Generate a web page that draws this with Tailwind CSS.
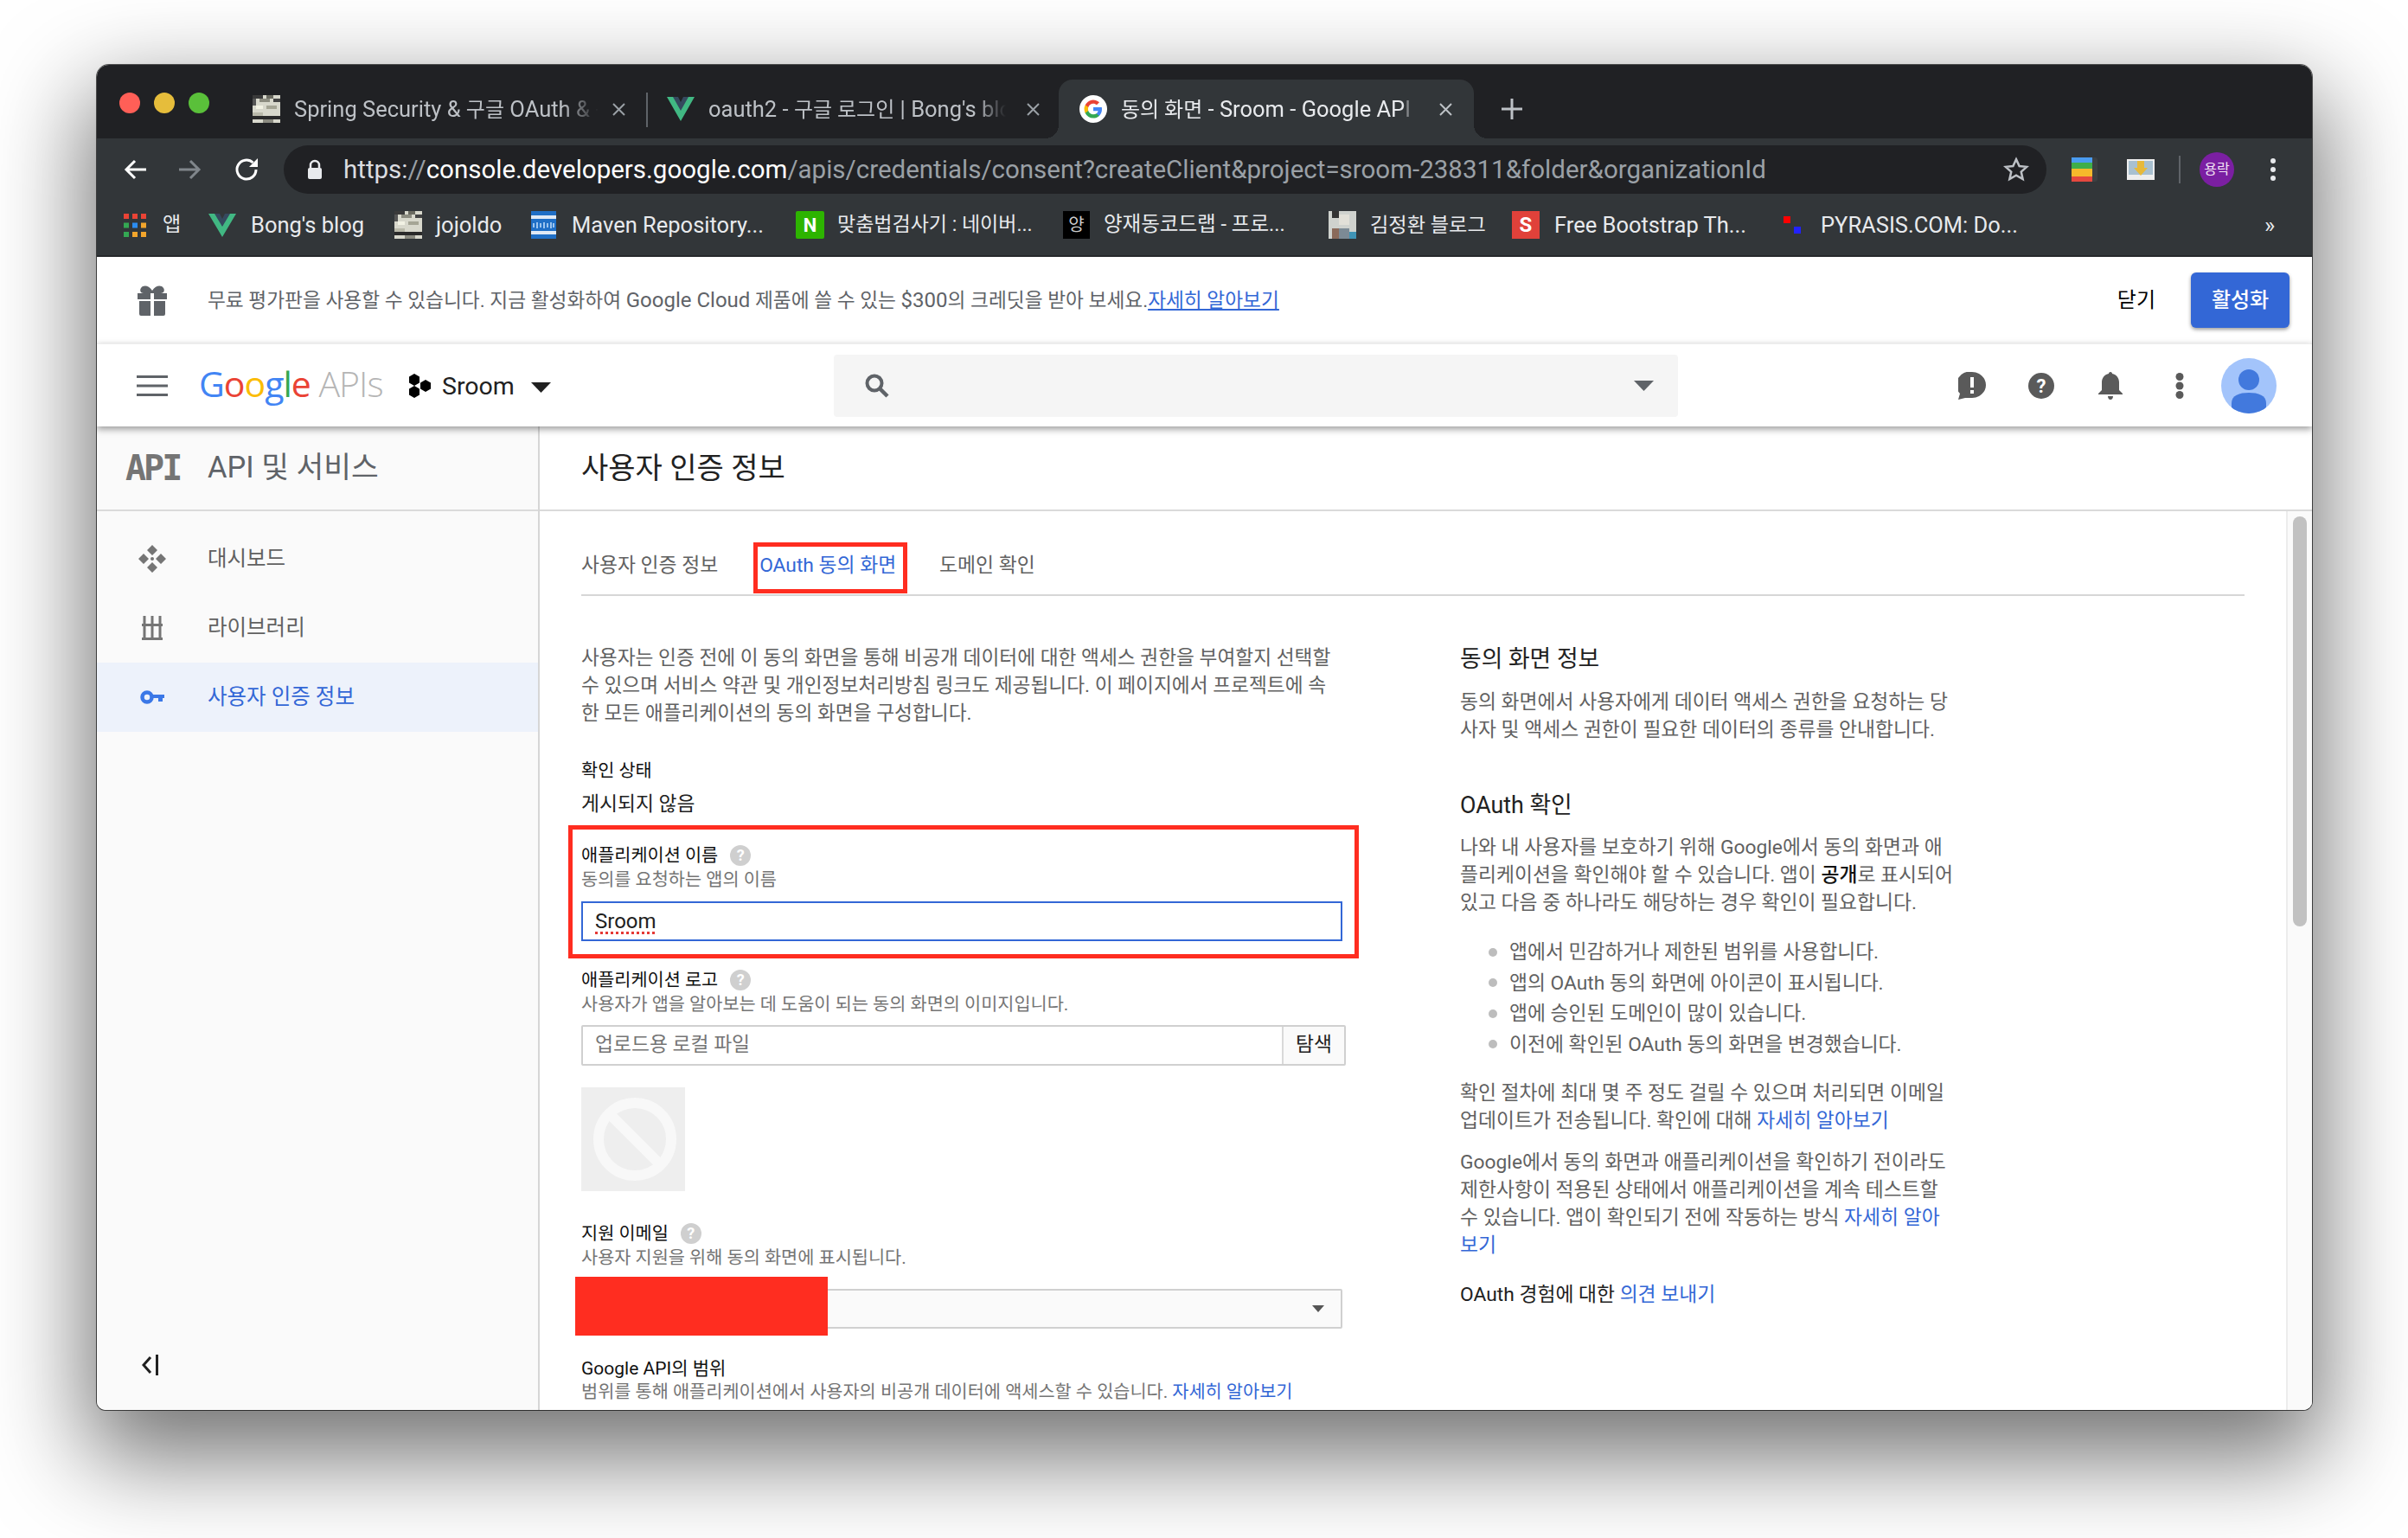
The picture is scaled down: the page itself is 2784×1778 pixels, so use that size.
<!DOCTYPE html>
<html lang="ko">
<head>
<meta charset="UTF-8">
<title>동의 화면 - Sroom - Google API</title>
<script src="https://cdn.jsdelivr.net/npm/@tailwindcss/browser@4"></script>
</head>
<body class="w-[2784px] h-[1778px] overflow-hidden bg-white pl-[112px] pt-[75px] font-['Roboto','Noto_Sans_CJK_KR',sans-serif]">
<div class="w-[2561px] h-[1555px] rounded-t-[14px] rounded-b-[10px] overflow-hidden flex flex-col bg-white shadow-[0_0_0_1px_rgba(0,0,0,0.65),0_44px_110px_12px_rgba(0,0,0,0.55)]">

  <!-- tab strip -->
  <div class="h-[85px] shrink-0 bg-[#202124] flex items-end pl-[26px]">
    <div class="flex items-center gap-[16px] self-stretch pt-[3px]">
      <span class="w-[24px] h-[24px] rounded-full bg-[#ff5f57]"></span>
      <span class="w-[24px] h-[24px] rounded-full bg-[#e6bd3b]"></span>
      <span class="w-[24px] h-[24px] rounded-full bg-[#5ac03a]"></span>
    </div>
    <div class="flex items-center h-[68px] ml-[50px] w-[455px] text-[25.5px] text-[#bdc1c6]">
      <svg class="w-[32px] h-[32px] mr-[16px] shrink-0" viewBox="0 0 8 8"><rect width="8" height="8" fill="#d8d8cc"/><rect width="3" height="1" fill="#3a3a3a"/><rect x="4" width="2" height="1" fill="#6a6a60"/><rect y="1" width="1" height="2" fill="#555"/><rect x="2" y="1" width="3" height="1" fill="#8c8c80"/><rect x="6" y="1" width="2" height="1" fill="#444"/><rect x="1" y="3" width="2" height="1" fill="#f2f2e4"/><rect x="4" y="3" width="3" height="1" fill="#a5a595"/><rect y="5" width="3" height="1" fill="#b9b9aa"/><rect y="6" width="8" height="1" fill="#2a2a2a"/><rect x="3" y="7" width="3" height="1" fill="#8a8a80"/></svg>
      <span class="w-[352px] overflow-hidden whitespace-nowrap [mask-image:linear-gradient(to_right,black_88%,transparent)]">Spring Security &amp; <span class="text-[24px]">구글</span> OAuth &amp; <span class="text-[24px]">구글</span></span>
      <svg class="ml-[16px] w-[15px] h-[15px] shrink-0" viewBox="0 0 15 15"><path d="m1 1 13 13M14 1 1 14" stroke="#9aa0a6" stroke-width="2"/></svg>
    </div>
    <div class="h-[40px] w-[2px] bg-[#5f6368] mb-[13px]"></div>
    <div class="flex items-center h-[68px] ml-[22px] w-[453px] text-[25.5px] text-[#bdc1c6]">
      <svg class="w-[32px] h-[32px] mr-[16px] shrink-0" viewBox="0 0 32 32"><path d="M0 2h8l8 14 8-14h8L16 30z" fill="#41b883"/><path d="M7 2h6l3 6 3-6h6L16 18z" fill="#35495e"/></svg>
      <span class="w-[344px] overflow-hidden whitespace-nowrap [mask-image:linear-gradient(to_right,black_90%,transparent)]">oauth2 - <span class="text-[24px]">구글 로그인</span> | Bong's blog</span>
      <svg class="ml-[24px] w-[15px] h-[15px] shrink-0" viewBox="0 0 15 15"><path d="m1 1 13 13M14 1 1 14" stroke="#9aa0a6" stroke-width="2"/></svg>
    </div>
    <div class="relative flex items-center h-[68px] w-[480px] pl-[24px] bg-[#323639] rounded-t-[16px] text-[25.5px] text-[#e8eaed]">
      <span class="absolute -left-[16px] bottom-0 w-[16px] h-[16px] bg-[radial-gradient(circle_at_0_0,#202124_16px,#323639_16px)]"></span>
      <span class="absolute -right-[16px] bottom-0 w-[16px] h-[16px] bg-[radial-gradient(circle_at_100%_0,#202124_16px,#323639_16px)]"></span>
      <svg class="w-[32px] h-[32px] mr-[16px] shrink-0" viewBox="0 0 32 32"><circle cx="16" cy="16" r="16" fill="#fff"/><path d="M26 16.300c0-.8-.1-1.500-.2-2.200H16v4.100h5.600a4.800 4.800 0 0 1-2 3.100v2.600h3.300c1.900-1.800 3.100-4.400 3.100-7.600z" fill="#4285f4"/><path d="M16 26.500c2.800 0 5.100-.9 6.900-2.600l-3.300-2.600c-.9.600-2.100 1-3.600 1-2.700 0-5-1.800-5.800-4.300H6.700v2.700a10.400 10.400 0 0 0 9.300 5.800z" fill="#34a853"/><path d="M10.200 18c-.4-1.300-.4-2.700 0-4v-2.700H6.700a10.400 10.400 0 0 0 0 9.400z" fill="#fbbc05"/><path d="M16 9.700c1.500 0 2.900.5 4 1.600l3-3A10.400 10.400 0 0 0 6.700 11.300l3.500 2.700c.8-2.500 3.100-4.300 5.800-4.300z" fill="#ea4335"/></svg>
      <span class="w-[336px] overflow-hidden whitespace-nowrap [mask-image:linear-gradient(to_right,black_97%,transparent)]"><span class="text-[24px]">동의 화면</span> - Sroom - Google API</span>
      <svg class="ml-[32px] w-[15px] h-[15px] shrink-0" viewBox="0 0 15 15"><path d="m1 1 13 13M14 1 1 14" stroke="#bdc1c6" stroke-width="2"/></svg>
    </div>
    <svg class="w-[24px] h-[24px] ml-[32px] mb-[22px]" viewBox="0 0 24 24"><path d="M12 0v24M0 12h24" stroke="#bdc1c6" stroke-width="3"/></svg>
  </div>

  <!-- toolbar -->
  <div class="h-[80px] shrink-0 bg-[#323639] flex items-center pl-[31px] pb-[8px]">
    <svg class="w-[26px] h-[26px] shrink-0" viewBox="0 0 26 26"><path d="M26 13H3M13 3 3 13l10 10" fill="none" stroke="#fff" stroke-width="3"/></svg>
    <svg class="w-[26px] h-[26px] shrink-0 ml-[38px]" viewBox="0 0 26 26"><path d="M0 13h23M13 3l10 10-10 10" fill="none" stroke="#80868b" stroke-width="3"/></svg>
    <svg class="w-[28px] h-[28px] shrink-0 ml-[38px]" viewBox="0 0 28 28"><path d="M25 14a11 11 0 1 1-3.500-8" fill="none" stroke="#fff" stroke-width="3"/><path d="M27 1v10H17z" fill="#fff"/></svg>
    <div class="ml-[29px] w-[2038px] h-[56px] rounded-full bg-[#202124] flex items-center pl-[27px] pr-[20px] text-[29.5px] whitespace-nowrap">
      <svg class="w-[18px] h-[24px] shrink-0 mr-[24px]" viewBox="0 0 18 24"><path d="M4 10V7a5 5 0 0 1 10 0v3" fill="none" stroke="#e8eaed" stroke-width="2.500"/><rect x="1" y="10" width="16" height="13" rx="2" fill="#e8eaed"/></svg>
      <span class="text-[#9aa0a6] flex-1"><span class="text-[#dadce0]">https:</span>//<span class="text-white">console.developers.google.com</span>/apis/credentials/consent?createClient&amp;project=sroom-238311&amp;folder&amp;organizationId</span>
      <svg class="w-[30px] h-[30px] shrink-0" viewBox="0 0 24 24"><path d="m12 2.500 2.900 6.300 6.800.7-5.100 4.600 1.500 6.800-6.100-3.500-6.100 3.500 1.500-6.800L2.300 9.500l6.800-.7z" fill="none" stroke="#bdc1c6" stroke-width="2"/></svg>
    </div>
    <svg class="w-[30px] h-[28px] shrink-0 ml-[29px]" viewBox="0 0 30 28"><rect width="30" height="28" rx="3" fill="#3c4043"/><rect width="24" height="7" fill="#4a9cf0"/><rect y="6" width="24" height="8" fill="#3fae49"/><rect y="13" width="24" height="9" fill="#f6b92b"/><rect y="22" width="24" height="6" fill="#e5483f"/></svg>
    <svg class="w-[32px] h-[24px] shrink-0 ml-[34px]" viewBox="0 0 32 24"><rect width="32" height="24" fill="#eee"/><rect x="2" y="2" width="28" height="16" fill="#a8c0d0"/><path d="M12 2h8v8h4l-8 9-8-9h4z" fill="#e7b93a"/></svg>
    <div class="w-[2px] h-[32px] bg-[#5f6368] ml-[28px] shrink-0"></div>
    <div class="w-[40px] h-[40px] rounded-full bg-[#7b1fa2] text-[#f3e5f5] text-[16px] ml-[22px] flex items-center justify-center shrink-0">용락</div>
    <svg class="w-[8px] h-[28px] ml-[41px] shrink-0" viewBox="0 0 8 28"><circle cx="4" cy="4" r="3" fill="#e8eaed"/><circle cx="4" cy="14" r="3" fill="#e8eaed"/><circle cx="4" cy="24" r="3" fill="#e8eaed"/></svg>
  </div>

  <!-- bookmarks -->
  <div class="h-[57px] shrink-0 bg-[#323639] flex items-center pl-[31px] pb-[15px] text-[25.5px] text-[#e8eaed] whitespace-nowrap border-b-[2px] border-[#26282b]">
    <svg class="w-[26px] h-[27px] shrink-0 mr-[19px]" viewBox="0 0 26 27"><g fill="#ea4335"><rect width="6" height="6"/><rect x="10" width="6" height="6"/><rect x="20" width="6" height="6"/></g><rect y="10.500" width="6" height="6" fill="#34a853"/><rect x="10" y="10.500" width="6" height="6" fill="#2b8cf0"/><rect x="20" y="10.500" width="6" height="6" fill="#f2a52c"/><rect y="21" width="6" height="6" fill="#34a853"/><rect x="10" y="21" width="6" height="6" fill="#f2a52c"/><rect x="20" y="21" width="6" height="6" fill="#f2a52c"/></svg>
    <span class="w-[53px] shrink-0 text-[23px]">앱</span>
    <svg class="w-[32px] h-[32px] shrink-0 mr-[17px]" viewBox="0 0 32 32"><path d="M0 3h8l8 14 8-14h8L16 30z" fill="#41b883"/><path d="M7 3h6l3 6 3-6h6L16 18z" fill="#35495e"/></svg>
    <span class="w-[166px] shrink-0">Bong's blog</span>
    <svg class="w-[32px] h-[32px] shrink-0 mr-[16px]" viewBox="0 0 8 8"><rect width="8" height="8" fill="#d8d8cc"/><rect width="3" height="1" fill="#3a3a3a"/><rect x="4" width="2" height="1" fill="#6a6a60"/><rect y="1" width="1" height="2" fill="#555"/><rect x="2" y="1" width="3" height="1" fill="#8c8c80"/><rect x="6" y="1" width="2" height="1" fill="#444"/><rect x="1" y="3" width="2" height="1" fill="#f2f2e4"/><rect x="4" y="3" width="3" height="1" fill="#a5a595"/><rect y="5" width="3" height="1" fill="#b9b9aa"/><rect y="6" width="8" height="1" fill="#2a2a2a"/><rect x="3" y="7" width="3" height="1" fill="#8a8a80"/></svg>
    <span class="w-[110px] shrink-0">jojoldo</span>
    <svg class="w-[29px] h-[32px] shrink-0 mr-[18px]" viewBox="0 0 29 32"><rect width="29" height="32" fill="#1f6fc6"/><rect y="5" width="29" height="4" fill="#dfe9f5"/><rect y="23" width="29" height="4" fill="#dfe9f5"/><path d="M3 14v5M7 13v7M11 14v5M15 13v7M19 14v5M23 13v7M26 14v5" stroke="#9cc4ee" stroke-width="2"/></svg>
    <span class="w-[259px] shrink-0">Maven Repository...</span>
    <div class="w-[33px] h-[32px] shrink-0 mr-[15px] bg-[#2db400] rounded-[2px] text-white font-bold text-[22px] flex items-center justify-center">N</div>
    <span class="w-[261px] shrink-0 text-[23px]">맞춤법검사기 : 네이버...</span>
    <div class="w-[31px] h-[32px] shrink-0 mr-[16px] bg-black text-[#ccc] text-[20px] flex items-center justify-center">양</div>
    <span class="w-[260px] shrink-0 text-[23.500px]">양재동코드랩 - 프로...</span>
    <svg class="w-[32px] h-[32px] shrink-0 mr-[16px]" viewBox="0 0 8 8"><rect width="8" height="8" fill="#cfd2ce"/><rect x="1" y="0" width="2" height="2" fill="#333"/><rect x="3" y="1" width="3" height="3" fill="#e2e0d8"/><rect x="1" y="5" width="2" height="3" fill="#8a6a5a"/><rect x="3" y="5" width="3" height="3" fill="#7c8a95"/><rect x="6" y="6" width="2" height="2" fill="#3f93b5"/></svg>
    <span class="w-[164px] shrink-0 text-[23.200px]">김정환 블로그</span>
    <div class="w-[32px] h-[32px] shrink-0 mr-[17px] bg-[#e0413a] text-white font-bold text-[24px] flex items-center justify-center">S</div>
    <span class="w-[265px] shrink-0">Free Bootstrap Th...</span>
    <svg class="w-[20px] h-[32px] shrink-0 mr-[23px]" viewBox="0 0 20 32"><rect y="6" width="8" height="8" fill="#f00"/><rect x="12" y="18" width="8" height="8" fill="#22f"/></svg>
    <span class="w-[513px] shrink-0">PYRASIS.COM: Do...</span>
    <span class="text-[26px] text-[#e8eaed]">»</span>
  </div>

  <!-- free trial banner -->
  <div class="h-[100px] shrink-0 bg-white flex items-center pl-[46px] pr-[26px]">
    <svg class="w-[36px] h-[36px] shrink-0" viewBox="0 0 36 36"><path d="M1 10h15v7H1zM20 10h15v7H20zM3 19h13v17H5a2 2 0 0 1-2-2zM20 19h13v15a2 2 0 0 1-2 2H20zM5 4c3-4 9-3 13 3 4-6 10-7 13-3 2 3 0 6-3 6H8C5 10 3 7 5 4z" fill="#5f6368"/></svg>
    <p class="ml-[46px] text-[22.700px] text-[#5f6368] whitespace-nowrap flex-1">무료 평가판을 사용할 수 있습니다. 지금 활성화하여 <span class="text-[24px]">Google Cloud</span> 제품에 쓸 수 있는 <span class="text-[24px]">$300</span>의 크레딧을 받아 보세요.<a class="text-[#3367d6] underline">자세히 알아보기</a></p>
    <span class="text-[24px] text-black mr-[41px]">닫기</span>
    <button class="w-[114px] h-[64px] rounded-[6px] bg-[#3367d6] text-white text-[24px] font-medium shadow-[0_2px_4px_rgba(0,0,0,0.4)]">활성화</button>
  </div>

  <!-- google apis bar -->
  <div class="relative z-10 h-[96px] shrink-0 bg-white flex items-center pl-[46px] border-t border-[#eeeeee] shadow-[0_3px_8px_rgba(0,0,0,0.4)]">
    <div class="w-[806px] shrink-0 flex items-center">
      <svg class="w-[36px] h-[24px] shrink-0" viewBox="0 0 36 24"><path d="M0 1.500h36M0 12h36M0 22.500h36" stroke="#5f6368" stroke-width="3"/></svg>
      <span class="ml-[36px] w-[210px] shrink-0 pb-[4px] text-[41px] tracking-[-1px] leading-none whitespace-nowrap font-['Open_Sans',sans-serif]"><span class="text-[#4285f4]">G</span><span class="text-[#ea4335]">o</span><span class="text-[#fbbc05]">o</span><span class="text-[#4285f4]">g</span><span class="text-[#34a853]">l</span><span class="text-[#ea4335]">e</span><span class="text-[#b5b5b5] font-light"> APIs</span></span>
      <svg class="w-[27px] h-[28px] shrink-0 ml-[32px]" viewBox="0 0 27 28"><path d="M7 0l6 3.500v7L7 14l-6-3.500v-7zM7 14l6 3.500v7L7 28l-6-3.500v-7zM20 7l6 3.500v7L20 21l-6-3.500v-7z" fill="#000"/></svg>
      <span class="ml-[12px] text-[28.500px] text-[#212121] pt-[3px]">Sroom</span>
      <svg class="w-[23px] h-[12px] ml-[19px] mt-[4px] shrink-0" viewBox="0 0 23 12"><path d="M0 0h23L11.500 12z" fill="#212121"/></svg>
    </div>
    <div class="w-[976px] h-[72px] shrink-0 rounded-[4px] bg-[#f5f5f5] flex items-center justify-between pl-[36px] pr-[28px]">
      <svg class="w-[28px] h-[28px]" viewBox="0 0 28 28"><circle cx="11" cy="11" r="8.500" fill="none" stroke="#5f6368" stroke-width="4"/><path d="m17 17 9 9" stroke="#5f6368" stroke-width="4.500"/></svg>
      <svg class="w-[23px] h-[12px]" viewBox="0 0 23 12"><path d="M0 0h23L11.500 12z" fill="#5f6368"/></svg>
    </div>
    <svg class="w-[32px] h-[32px] ml-[324px] shrink-0" viewBox="0 0 32 32"><path d="M16 0a16 15 0 0 1 0 30H8l-8 2 2-7A15 15 0 0 1 16 0z" fill="#5a5a5a"/><rect x="14" y="6" width="4" height="12" fill="#fff"/><rect x="14" y="21" width="4" height="4" fill="#fff"/></svg>
    <svg class="w-[30px] h-[30px] ml-[49px] shrink-0" viewBox="0 0 30 30"><circle cx="15" cy="15" r="15" fill="#5a5a5a"/><text x="15" y="23" text-anchor="middle" font-size="22" font-weight="700" fill="#fff" font-family="Roboto">?</text></svg>
    <svg class="w-[28px] h-[32px] ml-[51px] shrink-0" viewBox="0 0 28 32"><path d="M14 0c1.500 0 2 1 2 2 5 1 8 5 8 10v9l4 4v1H0v-1l4-4v-9c0-5 3-9 8-10 0-1 .5-2 2-2zM11 28h6c0 2-1 4-3 4s-3-2-3-4z" fill="#5a5a5a"/></svg>
    <svg class="w-[10px] h-[30px] ml-[61px] shrink-0" viewBox="0 0 10 30"><circle cx="5" cy="4.500" r="4.500" fill="#5a5a5a"/><circle cx="5" cy="15" r="4.500" fill="#5a5a5a"/><circle cx="5" cy="25.500" r="4.500" fill="#5a5a5a"/></svg>
    <svg class="w-[64px] h-[64px] ml-[43px] shrink-0" viewBox="0 0 64 64"><defs><clipPath id="av"><circle cx="32" cy="32" r="32"/></clipPath></defs><circle cx="32" cy="32" r="32" fill="#a3c4fb"/><g clip-path="url(#av)" fill="#4279dd"><ellipse cx="32" cy="25" rx="12" ry="12"/><path d="M12 64V52c0-9 9-12 20-12s20 3 20 12v12z"/></g></svg>
  </div>

  <!-- body -->
  <div class="flex-1 min-h-0 flex">
    <aside class="w-[512px] shrink-0 bg-[#fafafa] border-r-[2px] border-[#d6d6d6] flex flex-col">
      <div class="h-[98px] shrink-0 border-b-[2px] border-[#dadada] flex items-center pl-[33px]">
        <span class="w-[95px] text-[40px] leading-none font-bold text-[#757575] font-['DejaVu_Sans_Mono',monospace] tracking-[-3px]">API</span>
        <span class="text-[34.500px] text-[#5f6368]">API 및 서비스</span>
      </div>
      <nav class="pt-[15px] text-[24.500px] text-[#616161]">
        <div class="h-[80px] flex items-center">
          <div class="w-[128px] shrink-0 flex justify-center">
            <svg class="w-[32px] h-[32px]" viewBox="0 0 32 32"><path d="M16 0l6 6-6 6-6-6zM16 32l-6-6 6-6 6 6zM0 16l6-6 6 6-6 6zM32 16l-6 6-6-6 6-6z" fill="#757575"/><circle cx="16" cy="16" r="2" fill="#757575"/></svg>
          </div>
          <span>대시보드</span>
        </div>
        <div class="h-[80px] flex items-center">
          <div class="w-[128px] shrink-0 flex justify-center">
            <svg class="w-[24px] h-[28px]" viewBox="0 0 24 28"><path d="M3 0v26M12 0v26M21 0v26" stroke="#757575" stroke-width="3" fill="none"/><rect y="9" width="24" height="3" fill="#757575"/><rect y="25" width="24" height="3" fill="#757575"/></svg>
          </div>
          <span>라이브러리</span>
        </div>
        <div class="h-[80px] flex items-center bg-[#edf2fb] text-[#3367d6]">
          <div class="w-[128px] shrink-0 flex justify-center">
            <svg class="w-[28px] h-[16px]" viewBox="0 0 28 16"><circle cx="8" cy="8" r="5.500" fill="none" stroke="#3b78e7" stroke-width="4.500"/><path d="M14 5h14v4h-2v4h-5V9h-7z" fill="#3b78e7"/></svg>
          </div>
          <span>사용자 인증 정보</span>
        </div>
      </nav>
      <div class="mt-auto pl-[52px] pb-[40px]">
        <svg class="w-[20px] h-[24px]" viewBox="0 0 20 24"><path d="M10 3 2 12l8 9" fill="none" stroke="#212121" stroke-width="3"/><rect x="16" y="0" width="3" height="24" fill="#212121"/></svg>
      </div>
    </aside>
    <main class="flex-1 min-w-0 bg-white flex flex-col">
      <div class="h-[98px] shrink-0 border-b-[2px] border-[#dadada] flex items-center pl-[48px] text-[34px] text-[#212121]">사용자 인증 정보</div>
      <div class="flex-1 min-h-0 flex overflow-hidden">
        <div class="flex-1 min-w-0 pl-[48px] pr-[48px] overflow-hidden">
          <div class="h-[98px] flex items-center border-b-[2px] border-[#d6d6d6] text-[22.800px] leading-[32px] text-[#616161] pt-[30px]">
            <span>사용자 인증 정보</span>
            <span class="relative ml-[48px] text-[#3367d6]">OAuth 동의 화면
              <span class="absolute -left-[7px] -right-[13px] -top-[11px] -bottom-[16px] border-[5px] border-[#ff2d20]"></span>
            </span>
            <span class="ml-[50px]">도메인 확인</span>
          </div>
          <div class="flex mt-[56px]">
            <div class="w-[880px] shrink-0">
              <p class="text-[22.700px] leading-[32px] text-[#616161] w-[872px]">사용자는 인증 전에 이 동의 화면을 통해 비공개 데이터에 대한 액세스 권한을 부여할지 선택할 수 있으며 서비스 약관 및 개인정보처리방침 링크도 제공됩니다. 이 페이지에서 프로젝트에 속한 모든 애플리케이션의 동의 화면을 구성합니다.</p>
              <div class="mt-[36px] text-[20.800px] leading-[28px] text-[#111111]">확인 상태</div>
              <div class="mt-[9px] text-[22.800px] leading-[32px] text-[#212121]">게시되지 않음</div>

              <div class="relative mt-[29px] w-[880px]">
                <div class="absolute -left-[15px] -right-[19px] -top-[21px] -bottom-[20px] border-[5px] border-[#ff2d20]"></div>
                <div class="flex items-center text-[20.800px] leading-[28px] text-[#111111]">애플리케이션 이름<span class="ml-[14px] w-[24px] h-[24px] rounded-full bg-[#cfcfcf] text-white text-[18px] font-bold flex items-center justify-center">?</span></div>
                <div class="text-[20.800px] leading-[28px] text-[#757575]">동의를 요청하는 앱의 이름</div>
                <div class="mt-[11px] h-[46px] border-[2px] border-[#3367d6] flex items-center pl-[14px] text-[24px] text-[#212121]"><span class="underline decoration-dotted decoration-[#e53935] decoration-[3px] underline-offset-[4px]">Sroom</span></div>
              </div>

              <div class="mt-[31px] flex items-center text-[20.800px] leading-[28px] text-[#111111]">애플리케이션 로고<span class="ml-[14px] w-[24px] h-[24px] rounded-full bg-[#cfcfcf] text-white text-[18px] font-bold flex items-center justify-center">?</span></div>
              <div class="text-[20.800px] leading-[28px] text-[#757575]">사용자가 앱을 알아보는 데 도움이 되는 동의 화면의 이미지입니다.</div>
              <div class="mt-[10px] w-[884px] h-[47px] border-[2px] border-[#d0d0d0] rounded-[2px] flex items-stretch text-[22.800px]">
                <span class="flex-1 flex items-center pl-[14px] text-[#757575]">업로드용 로컬 파일</span>
                <span class="w-[72px] bg-[#fafafa] border-l-[2px] border-[#d9d9d9] flex items-center justify-center text-[#212121]">탐색</span>
              </div>
              <div class="mt-[25px] w-[120px] h-[120px] bg-[#eeeeee] flex items-center justify-center">
                <svg class="w-[96px] h-[96px] translate-x-[2px]" viewBox="0 0 96 96"><circle cx="48" cy="48" r="42" fill="none" stroke="#f8f8f8" stroke-width="12"/><path d="M20 20l56 56" stroke="#f8f8f8" stroke-width="12"/></svg>
              </div>

              <div class="mt-[35px] flex items-center text-[20.800px] leading-[28px] text-[#111111]">지원 이메일<span class="ml-[14px] w-[24px] h-[24px] rounded-full bg-[#cfcfcf] text-white text-[18px] font-bold flex items-center justify-center">?</span></div>
              <div class="text-[20.800px] leading-[28px] text-[#757575]">사용자 지원을 위해 동의 화면에 표시됩니다.</div>
              <div class="relative mt-[22px] h-[46px] border-[2px] border-[#d0d0d0] rounded-[2px] bg-[#fafafa] flex items-center justify-end pr-[19px]">
                <svg class="w-[14px] h-[8px]" viewBox="0 0 14 8"><path d="M0 0h14L7 8z" fill="#555"/></svg>
                <div class="absolute -left-[9px] -top-[16px] w-[292px] h-[68px] bg-[#ff2d20]"></div>
              </div>

              <div class="mt-[32px] text-[21px] leading-[28px] text-[#111111]">Google API의 범위</div>
              <div class="text-[20.800px] leading-[26px] text-[#757575] whitespace-nowrap">범위를 통해 애플리케이션에서 사용자의 비공개 데이터에 액세스할 수 있습니다. <a class="text-[#3367d6]">자세히 알아보기</a></div>
            </div>
            <div class="w-[573px] ml-[136px] shrink-0 -mt-[1px] text-[22.800px] leading-[32px] text-[#616161]">
              <h3 class="text-[26.800px] leading-[36px] text-[#212121]">동의 화면 정보</h3>
              <p class="mt-[16px]">동의 화면에서 사용자에게 데이터 액세스 권한을 요청하는 당사자 및 액세스 권한이 필요한 데이터의 종류를 안내합니다.</p>
              <h3 class="mt-[53px] text-[26.800px] leading-[36px] text-[#212121]">OAuth 확인</h3>
              <p class="mt-[15px]">나와 내 사용자를 보호하기 위해 Google에서 동의 화면과 애플리케이션을 확인해야 할 수 있습니다. 앱이 <b class="font-medium text-[#111111]">공개</b>로 표시되어 있고 다음 중 하나라도 해당하는 경우 확인이 필요합니다.</p>
              <ul class="mt-[23px] pl-[33px] leading-[35.500px]">
                <li class="flex items-center"><span class="w-[10px] h-[10px] rounded-full bg-[#bdbdbd] mr-[14px] shrink-0"></span>앱에서 민감하거나 제한된 범위를 사용합니다.</li>
                <li class="flex items-center"><span class="w-[10px] h-[10px] rounded-full bg-[#bdbdbd] mr-[14px] shrink-0"></span>앱의 OAuth 동의 화면에 아이콘이 표시됩니다.</li>
                <li class="flex items-center"><span class="w-[10px] h-[10px] rounded-full bg-[#bdbdbd] mr-[14px] shrink-0"></span>앱에 승인된 도메인이 많이 있습니다.</li>
                <li class="flex items-center"><span class="w-[10px] h-[10px] rounded-full bg-[#bdbdbd] mr-[14px] shrink-0"></span>이전에 확인된 OAuth 동의 화면을 변경했습니다.</li>
              </ul>
              <p class="mt-[23px]">확인 절차에 최대 몇 주 정도 걸릴 수 있으며 처리되면 이메일 업데이트가 전송됩니다. 확인에 대해 <a class="text-[#3367d6]">자세히 알아보기</a></p>
              <p class="mt-[16px]">Google에서 동의 화면과 애플리케이션을 확인하기 전이라도 제한사항이 적용된 상태에서 애플리케이션을 계속 테스트할 수 있습니다. 앱이 확인되기 전에 작동하는 방식 <a class="text-[#3367d6]">자세히 알아보기</a></p>
              <p class="mt-[25px] text-[#212121]">OAuth 경험에 대한 <a class="text-[#3367d6]">의견 보내기</a></p>
            </div>
          </div>
        </div>
        <div class="w-[30px] shrink-0 bg-[#fafafa] border-l-[2px] border-[#ececec] pt-[6px] pl-[6px]">
          <div class="w-[16px] h-[474px] rounded-full bg-[#c1c1c1]"></div>
        </div>
      </div>
    </main>
  </div>
</div>
</body>
</html>
